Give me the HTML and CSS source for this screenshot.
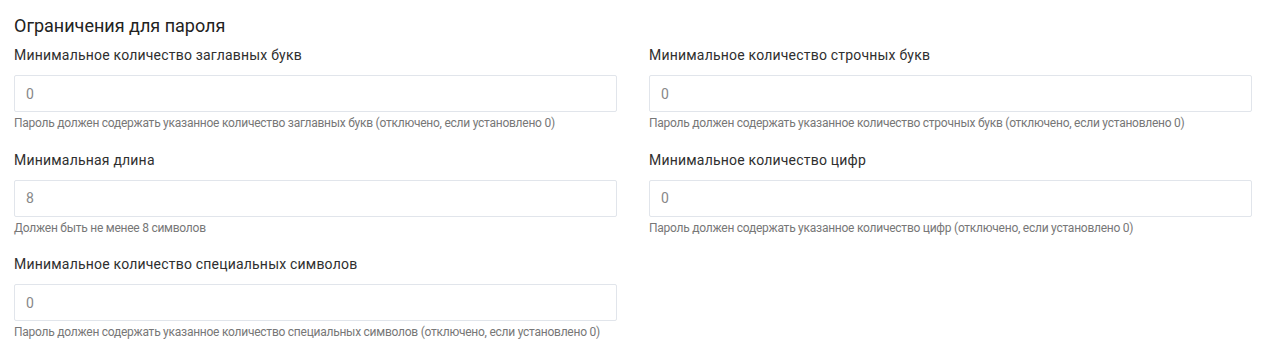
FILE: index.html
```html
<!DOCTYPE html>
<html lang="ru">
<head>
<meta charset="utf-8">
<title>Ограничения для пароля</title>
<link rel="stylesheet" href="styles.css">
</head>
<body>
<section class="section">
  <h2 class="section-title">Ограничения для пароля</h2>
  <div class="grid">
    <div class="field">
      <label class="field-label">Минимальное количество заглавных букв</label>
      <input class="field-input" type="text" value="0">
      <div class="field-help">Пароль должен содержать указанное количество заглавных букв (отключено, если установлено 0)</div>
    </div>
    <div class="field">
      <label class="field-label">Минимальное количество строчных букв</label>
      <input class="field-input" type="text" value="0">
      <div class="field-help">Пароль должен содержать указанное количество строчных букв (отключено, если установлено 0)</div>
    </div>
    <div class="field">
      <label class="field-label">Минимальная длина</label>
      <input class="field-input" type="text" value="8">
      <div class="field-help">Должен быть не менее 8 символов</div>
    </div>
    <div class="field">
      <label class="field-label">Минимальное количество цифр</label>
      <input class="field-input" type="text" value="0">
      <div class="field-help">Пароль должен содержать указанное количество цифр (отключено, если установлено 0)</div>
    </div>
    <div class="field">
      <label class="field-label">Минимальное количество специальных символов</label>
      <input class="field-input" type="text" value="0">
      <div class="field-help">Пароль должен содержать указанное количество специальных символов (отключено, если установлено 0)</div>
    </div>
  </div>
</section>
</body>
</html>
```
FILE: styles.css
```css
html, body {
  margin: 0;
  padding: 0;
  background: #ffffff;
}
body {
  font-family: Roboto, "Liberation Sans", sans-serif;
  color: #333333;
}
.section {
  padding: 15px 12px 0 14px;
}
.section-title {
  margin: 0 0 8px 0;
  font-size: 18px;
  line-height: 22px;
  font-weight: 400;
  color: #222222;
}
.grid {
  display: grid;
  grid-template-columns: 1fr 1fr;
  column-gap: 32px;
  row-gap: 17.5px;
}
.field {
  display: flex;
  flex-direction: column;
}
.field-label {
  font-size: 14px;
  line-height: 20px;
  letter-spacing: 0.2px;
  margin-bottom: 10px;
  color: #2f2f2f;
}
.field-input {
  box-sizing: border-box;
  height: 37px;
  border: 1px solid #e1e5eb;
  border-radius: 2px;
  padding: 0 11px;
  font-family: inherit;
  font-size: 14px;
  color: #888888;
  background: #ffffff;
  outline: none;
}
.field-help {
  margin-top: 3px;
  font-size: 12px;
  line-height: 17px;
  letter-spacing: -0.25px;
  color: #777777;
}
```
